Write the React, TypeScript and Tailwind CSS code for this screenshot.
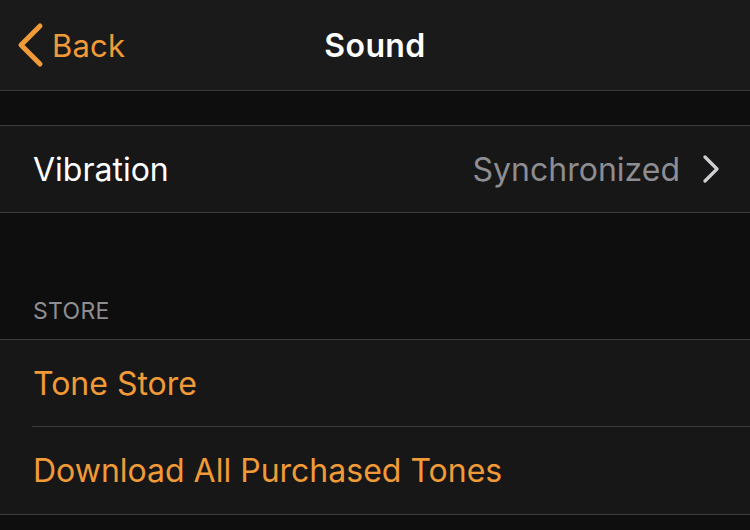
import React from "react";

const orange = "text-[#f19a38]";

const App = () => {
  return (
    <div
      className="w-[750px] h-[530px] overflow-hidden bg-[#0e0e0e]"
      style={{ fontFamily: "Inter, 'Noto Sans', sans-serif" }}
    >
      {/* nav bar */}
      <div className="relative h-[91px] bg-[#1a1a1a] border-b border-[#3a3a3a] flex items-center">
        <div className={`flex items-center pl-[16px] ${orange}`}>
          <svg width="30" height="46" viewBox="0 0 30 46" fill="none">
            <path
              d="M24 4 L5 23 L24 42"
              stroke="#f19a38"
              strokeWidth="5"
              strokeLinecap="round"
              strokeLinejoin="round"
            />
          </svg>
          <span className="ml-[6px] text-[31px] leading-none tracking-[0.2px]">Back</span>
        </div>
        <div className="absolute inset-x-0 top-0 h-[91px] flex items-center justify-center pointer-events-none">
          <span className="text-white text-[32px] font-semibold leading-none tracking-[0.4px]">Sound</span>
        </div>
      </div>

      <div className="h-[34px]" />

      {/* vibration row */}
      <div className="h-[88px] bg-[#171717] border-y border-[#3a3a3a] flex items-center pl-[33px] pr-[30px]">
        <span className="text-white text-[32px] leading-none pt-[2px]">Vibration</span>
        <span className="ml-auto text-[#8d8d92] text-[32px] leading-none pt-[2px]">Synchronized</span>
        <svg className="ml-[22px]" width="18" height="28" viewBox="0 0 18 28" fill="none">
          <path
            d="M3 2 L15 14 L3 26"
            stroke="#cfcfd3"
            strokeWidth="3.2"
            strokeLinecap="round"
            strokeLinejoin="round"
          />
        </svg>
      </div>

      {/* store header */}
      <div className="h-[126px] flex items-end pl-[33px] pb-[16px]">
        <span className="text-[#8d8d92] text-[23px] leading-none tracking-[0.3px]">STORE</span>
      </div>

      {/* store rows */}
      <div className="bg-[#171717] border-y border-[#3a3a3a]">
        <div className="h-[86px] flex items-center pl-[33px]">
          <span className={`${orange} text-[32px] leading-none pt-[1px]`}>Tone Store</span>
        </div>
        <div className="ml-[32px] border-t border-[#3a3a3a]" />
        <div className="h-[87px] flex items-center pl-[1px] ml-[32px]">
          <span className={`${orange} text-[32px] leading-none`}>
            Download All Purchased Tones
          </span>
        </div>
      </div>
    </div>
  );
};

export default App;
